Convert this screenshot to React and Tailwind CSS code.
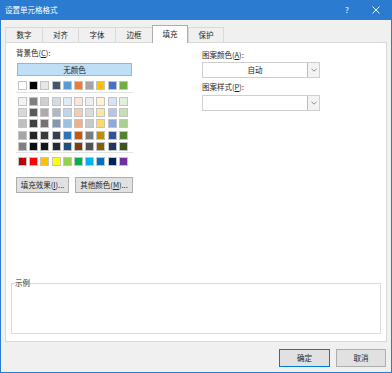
const themeRow = ["#FFFFFF","#000000","#E7E6E6","#44546A","#5B9BD5","#ED7D31","#A5A5A5","#FFC000","#4472C4","#70AD47"];
const tints = [
  ["#F2F2F2","#808080","#D0CECE","#D6DCE4","#DDEBF7","#FCE4D6","#EDEDED","#FFF2CC","#D9E1F2","#E2EFDA"],
  ["#D9D9D9","#595959","#AEAAAA","#ADB9CA","#BDD7EE","#F8CBAD","#DBDBDB","#FFE699","#B4C6E7","#C6E0B4"],
  ["#BFBFBF","#404040","#757171","#8497B0","#9BC2E6","#F4B084","#C9C9C9","#FFD966","#8EA9DB","#A9D08E"],
  ["#A6A6A6","#262626","#3A3838","#333F4F","#2F75B5","#C65911","#7B7B7B","#BF8F00","#305496","#548235"],
  ["#808080","#0D0D0D","#171616","#222B35","#1F4E78","#833C0C","#525252","#806000","#203764","#375623"],
];
const standard = ["#C00000","#FF0000","#FFC000","#FFFF00","#92D050","#00B050","#00B0F0","#0070C0","#002060","#7030A0"];

const tabs = [
  { label: "数字", w: "w-[37px]" },
  { label: "对齐", w: "w-[36px]" },
  { label: "字体", w: "w-[37px]" },
  { label: "边框", w: "w-[37px]" },
  { label: "填充", w: "w-[36px]", active: true },
  { label: "保护", w: "w-[36px]" },
];

function SwatchRow({ colors }) {
  return (
    <div className="flex gap-[2.2px] pl-[2px]">
      {colors.map((c, i) => (
        <div key={i} className="w-[9px] h-[9px] border border-[#c4c4c4]" style={{ backgroundColor: c }} />
      ))}
    </div>
  );
}

function Chevron() {
  return (
    <svg width="6" height="4" viewBox="0 0 6 4" fill="none">
      <path d="M0.5 0.8 L3 3.2 L5.5 0.8" stroke="#707070" strokeWidth="0.8" />
    </svg>
  );
}

function Select({ value }) {
  return (
    <div className="h-[16px] flex border border-[#cfcfcf] bg-white">
      <div className="flex-1 flex items-center justify-center">{value}</div>
      <div className="w-[12px] flex items-center justify-center border-l border-[#bdbdbd] bg-[#f3f3f3]">
        <Chevron />
      </div>
    </div>
  );
}

export default function App() {
  return (
    <div className="w-[392px] h-[373px] flex flex-col overflow-hidden font-['Noto_Sans_CJK_SC','Noto_Sans',sans-serif] text-[7.5px] leading-[10px] text-[#1e1e1e]">
      <div className="h-[20px] shrink-0 bg-[#2b7bd0] flex items-center pl-[5px] text-white">
        <span className="flex-1">设置单元格格式</span>
        <span className="w-[10px] text-center text-[8px] mr-[20px]">?</span>
        <svg width="8" height="8" viewBox="0 0 8 8" className="mr-[12px]">
          <path d="M0.5 0.5 L7.5 7.5 M7.5 0.5 L0.5 7.5" stroke="white" strokeWidth="0.9" />
        </svg>
      </div>
      <div className="flex-1 flex flex-col bg-[#f0f0f0] border-x border-b border-[#2b7bd0] px-[4px]">
        <div className="h-[22px] shrink-0 flex items-end">
          {tabs.map((t, i) =>
            t.active ? (
              <div key={i} className={`${t.w} h-[18px] mb-[-1px] relative z-10 bg-white border-x border-t border-[#adadad] flex items-center justify-center pb-[1px]`}>
                {t.label}
              </div>
            ) : (
              <div key={i} className={`${t.w} h-[15px] border-t border-l border-[#d9d9d9] ${i === tabs.length - 1 ? "border-r" : ""} flex items-center justify-center`}>
                {t.label}
              </div>
            )
          )}
        </div>
        <div className="h-[300px] shrink-0 bg-white border border-[#d9d9d9] flex flex-col">
          <div className="flex pl-[10px] pt-[5px]">
            <div className="w-[117px] flex flex-col">
              <div className="h-[10px]">背景色(<u>C</u>):</div>
              <div className="ml-[1px] mt-[5px] w-[115px] h-[13px] bg-[#bfdff7] border border-[#86bbe8] flex items-center justify-center">无颜色</div>
              <div className="mt-[5px]">
                <SwatchRow colors={themeRow} />
              </div>
              <div className="mt-[2px] h-px bg-[#e2e2e2]" />
              <div className="mt-[4px] flex flex-col gap-[2.2px]">
                {tints.map((row, i) => (
                  <SwatchRow key={i} colors={row} />
                ))}
              </div>
              <div className="mt-[1px] h-px bg-[#e2e2e2]" />
              <div className="mt-[4px]">
                <SwatchRow colors={standard} />
              </div>
              <div className="mt-[11px] flex gap-[6px]">
                <div className="w-[56px] h-[16px] bg-[#e1e1e1] border border-[#adadad] flex items-center justify-center">填充效果(<u>I</u>)...</div>
                <div className="w-[61px] h-[16px] bg-[#e1e1e1] border border-[#adadad] flex items-center justify-center">其他颜色(<u>M</u>)...</div>
              </div>
            </div>
            <div className="ml-[69px] w-[118px] pt-[2px] flex flex-col">
              <div className="h-[10px]">图案颜色(<u>A</u>):</div>
              <div className="mt-[2px]">
                <Select value="自动" />
              </div>
              <div className="mt-[4px] h-[10px]">图案样式(<u>P</u>):</div>
              <div className="mt-[3px]">
                <Select value="" />
              </div>
            </div>
          </div>
          <fieldset className="mt-auto mx-[5px] mb-[7px] h-[56px] border border-[#dcdcdc] pl-[3px]">
            <legend className="leading-[10px]">示例</legend>
          </fieldset>
        </div>
        <div className="mt-[7px] mr-[1px] flex justify-end gap-[6px]">
          <div className="w-[51px] h-[18px] bg-[#e1e1e1] border border-[#0078d7] flex items-center justify-center">确定</div>
          <div className="w-[50px] h-[18px] bg-[#e1e1e1] border border-[#adadad] flex items-center justify-center">取消</div>
        </div>
      </div>
    </div>
  );
}
